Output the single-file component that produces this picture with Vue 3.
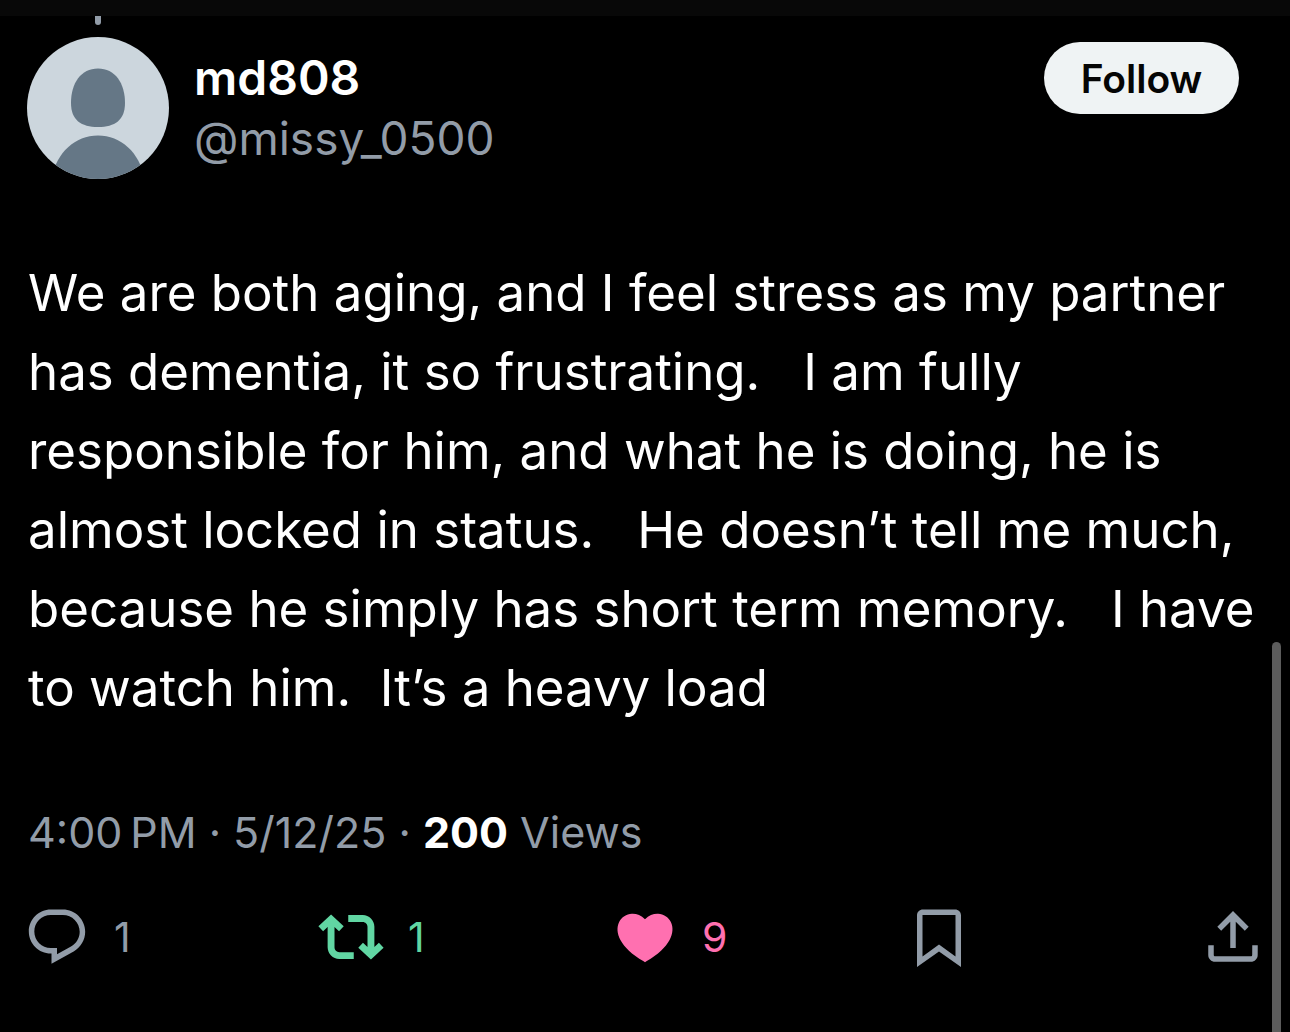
<script setup>
const lines = [
  'We are both aging, and I feel stress as my partner',
  'has dementia, it so frustrating.   I am fully',
  'responsible for him, and what he is doing, he is',
  'almost locked in status.   He doesn’t tell me much,',
  'because he simply has short term memory.   I have',
  'to watch him.  It’s a heavy load'
]

const actions = [
  {
    label: 'Reply',
    kind: 'reply',
    count: 1,
    path: 'M1.751 10c0-4.42 3.584-8 8.005-8h4.366c4.49 0 8.129 3.64 8.129 8.13 0 2.96-1.607 5.68-4.196 7.11l-8.054 4.46v-3.69h-.067c-4.49.1-8.183-3.51-8.183-8.01zm8.005-6c-3.317 0-6.005 2.69-6.005 6 0 3.37 2.77 6.08 6.138 6.01l.351-.01h1.761v2.3l5.087-2.81c1.951-1.08 3.163-3.13 3.163-5.36 0-3.39-2.744-6.13-6.129-6.13H9.756z'
  },
  {
    label: 'Repost',
    kind: 'repost',
    count: 1,
    path: 'M4.75 3.79l4.603 4.3-1.706 1.82L6 8.38v7.37c0 .97.784 1.75 1.75 1.75H13V20H7.75c-2.347 0-4.25-1.9-4.25-4.25V8.38L1.853 9.91.147 8.09l4.603-4.3zm11.5 2.71H11V4h5.25c2.347 0 4.25 1.9 4.25 4.25v7.37l1.647-1.53 1.706 1.82-4.603 4.3-4.603-4.3 1.706-1.82L18 15.62V8.25c0-.97-.784-1.75-1.75-1.75z'
  },
  {
    label: 'Like',
    kind: 'like',
    count: 9,
    path: 'M20.884 13.19c-1.351 2.48-4.001 5.12-8.379 7.67l-.503.3-.504-.3c-4.379-2.55-7.029-5.19-8.382-7.67-1.36-2.5-1.41-4.86-.514-6.67.887-1.79 2.647-2.91 4.601-3.01 1.651-.09 3.368.56 4.798 2.01 1.429-1.45 3.146-2.1 4.796-2.01 1.954.1 3.714 1.22 4.601 3.01.896 1.81.846 4.17-.514 6.67z'
  },
  {
    label: 'Bookmark',
    kind: 'bookmark',
    path: 'M4 4.2C4 2.9 4.9 2 6.2 2h11.6C19.1 2 20 2.9 20 4.2v18.74l-8-5.71-8 5.71V4.2zM6 4v15.06l6-4.29 6 4.29V4H6z'
  },
  {
    label: 'Share',
    kind: 'share',
    path: 'M12 2.59l5.7 5.7-1.41 1.42L13 6.41V16h-2V6.41l-3.3 3.3-1.41-1.42L12 2.59zM21 15l-.02 3.51c0 1.38-1.12 2.49-2.5 2.49H5.5C4.11 21 3 19.88 3 18.5V15h2v3.5c0 .28.22.5.5.5h12.98c.28 0 .5-.22.5-.5L19 15h2z'
  }
]
</script>

<template>
  <div class="page">
    <div class="topbar"></div>
    <article class="post">
      <header class="head">
        <svg class="avatar" viewBox="0 0 142 142" role="img" aria-label="Profile picture">
          <defs><clipPath id="round"><circle cx="71" cy="71" r="71" /></clipPath></defs>
          <g clip-path="url(#round)">
            <rect width="142" height="142" fill="#ccd6dd" />
            <path d="M71 31.5C88 31.5 98 46 98 66C98 83 88 90 71 90S44 83 44 66C44 46 54 31.5 71 31.5Z" fill="#657786" />
            <path d="M24 142C30 115 48 98.500 71 98.5S112 115 118 142Z" fill="#657786" />
          </g>
        </svg>
        <div class="names">
          <span class="name">md808</span>
          <a class="handle" href="#">@missy_0500</a>
        </div>
        <button class="follow" type="button">Follow</button>
      </header>
      <p class="text"><span v-for="line in lines" :key="line" class="line">{{ line }}</span></p>
      <div class="meta"><time>4:00&#x202F;PM · 5/12/25</time><span> · </span><strong>200</strong><span> Views</span></div>
      <footer class="actions">
        <button v-for="a in actions" :key="a.kind" class="action" :class="a.kind" type="button" :aria-label="a.label">
          <svg class="icon" viewBox="0 0 24 24" aria-hidden="true"><path :d="a.path" /></svg>
          <span v-if="a.count">{{ a.count }}</span>
        </button>
      </footer>
    </article>
    <div class="scrollbar"></div>
  </div>
</template>

<style>
body { background: #000; }
</style>
<style scoped>
.page { position: relative; min-height: 100vh; background: #000; color: #fff; font-family: Inter, sans-serif; overflow: hidden; }
.topbar { height: 16px; background: #080808; }
.post { padding: 0 24px; }
.head { display: flex; align-items: flex-start; padding: 21px 27px 0 3px; position: relative; }
.head::before { content: ''; position: absolute; left: 71px; top: 0; width: 6px; height: 9px; border-radius: 0 0 3px 3px; background: #929ca8; }
.avatar { width: 142px; height: 142px; flex: none; }
.names { display: flex; flex-direction: column; flex: 1; padding: 11px 0 0 25px; }
.name { font-size: 48px; line-height: 60px; font-weight: 600; }
.handle { font-size: 46px; line-height: 60px; color: #929ca8; text-decoration: none; }
button { font-family: inherit; border: 0; padding: 0; }
.follow { width: 195px; height: 72px; margin-top: 5px; border-radius: 36px; background: #eff3f4; color: #050505; font-size: 39px; font-weight: 600; }
.text { margin: 74px 0 0; padding-left: 4px; font-size: 51px; line-height: 79px; }
.line { display: block; white-space: pre; }
.meta { margin-top: 77px; padding-left: 4px; font-size: 43px; line-height: 56px; color: #929ca8; white-space: pre; }
.meta strong { color: #fff; font-weight: 700; }
.actions { display: grid; grid-template-columns: repeat(4, 1fr) 66px; margin-top: 44px; }
.action { display: flex; align-items: center; gap: 24px; background: none; color: #929ca8; font-size: 41px; }
.icon { width: 66px; height: 66px; flex: none; fill: currentColor; }
.repost { color: #61d6a3; }
.like { color: #ff70b0; }
.scrollbar { position: absolute; right: 9px; top: 642px; bottom: 0; width: 9px; border-radius: 5px 5px 0 0; background: #5c5c5c; }
</style>
